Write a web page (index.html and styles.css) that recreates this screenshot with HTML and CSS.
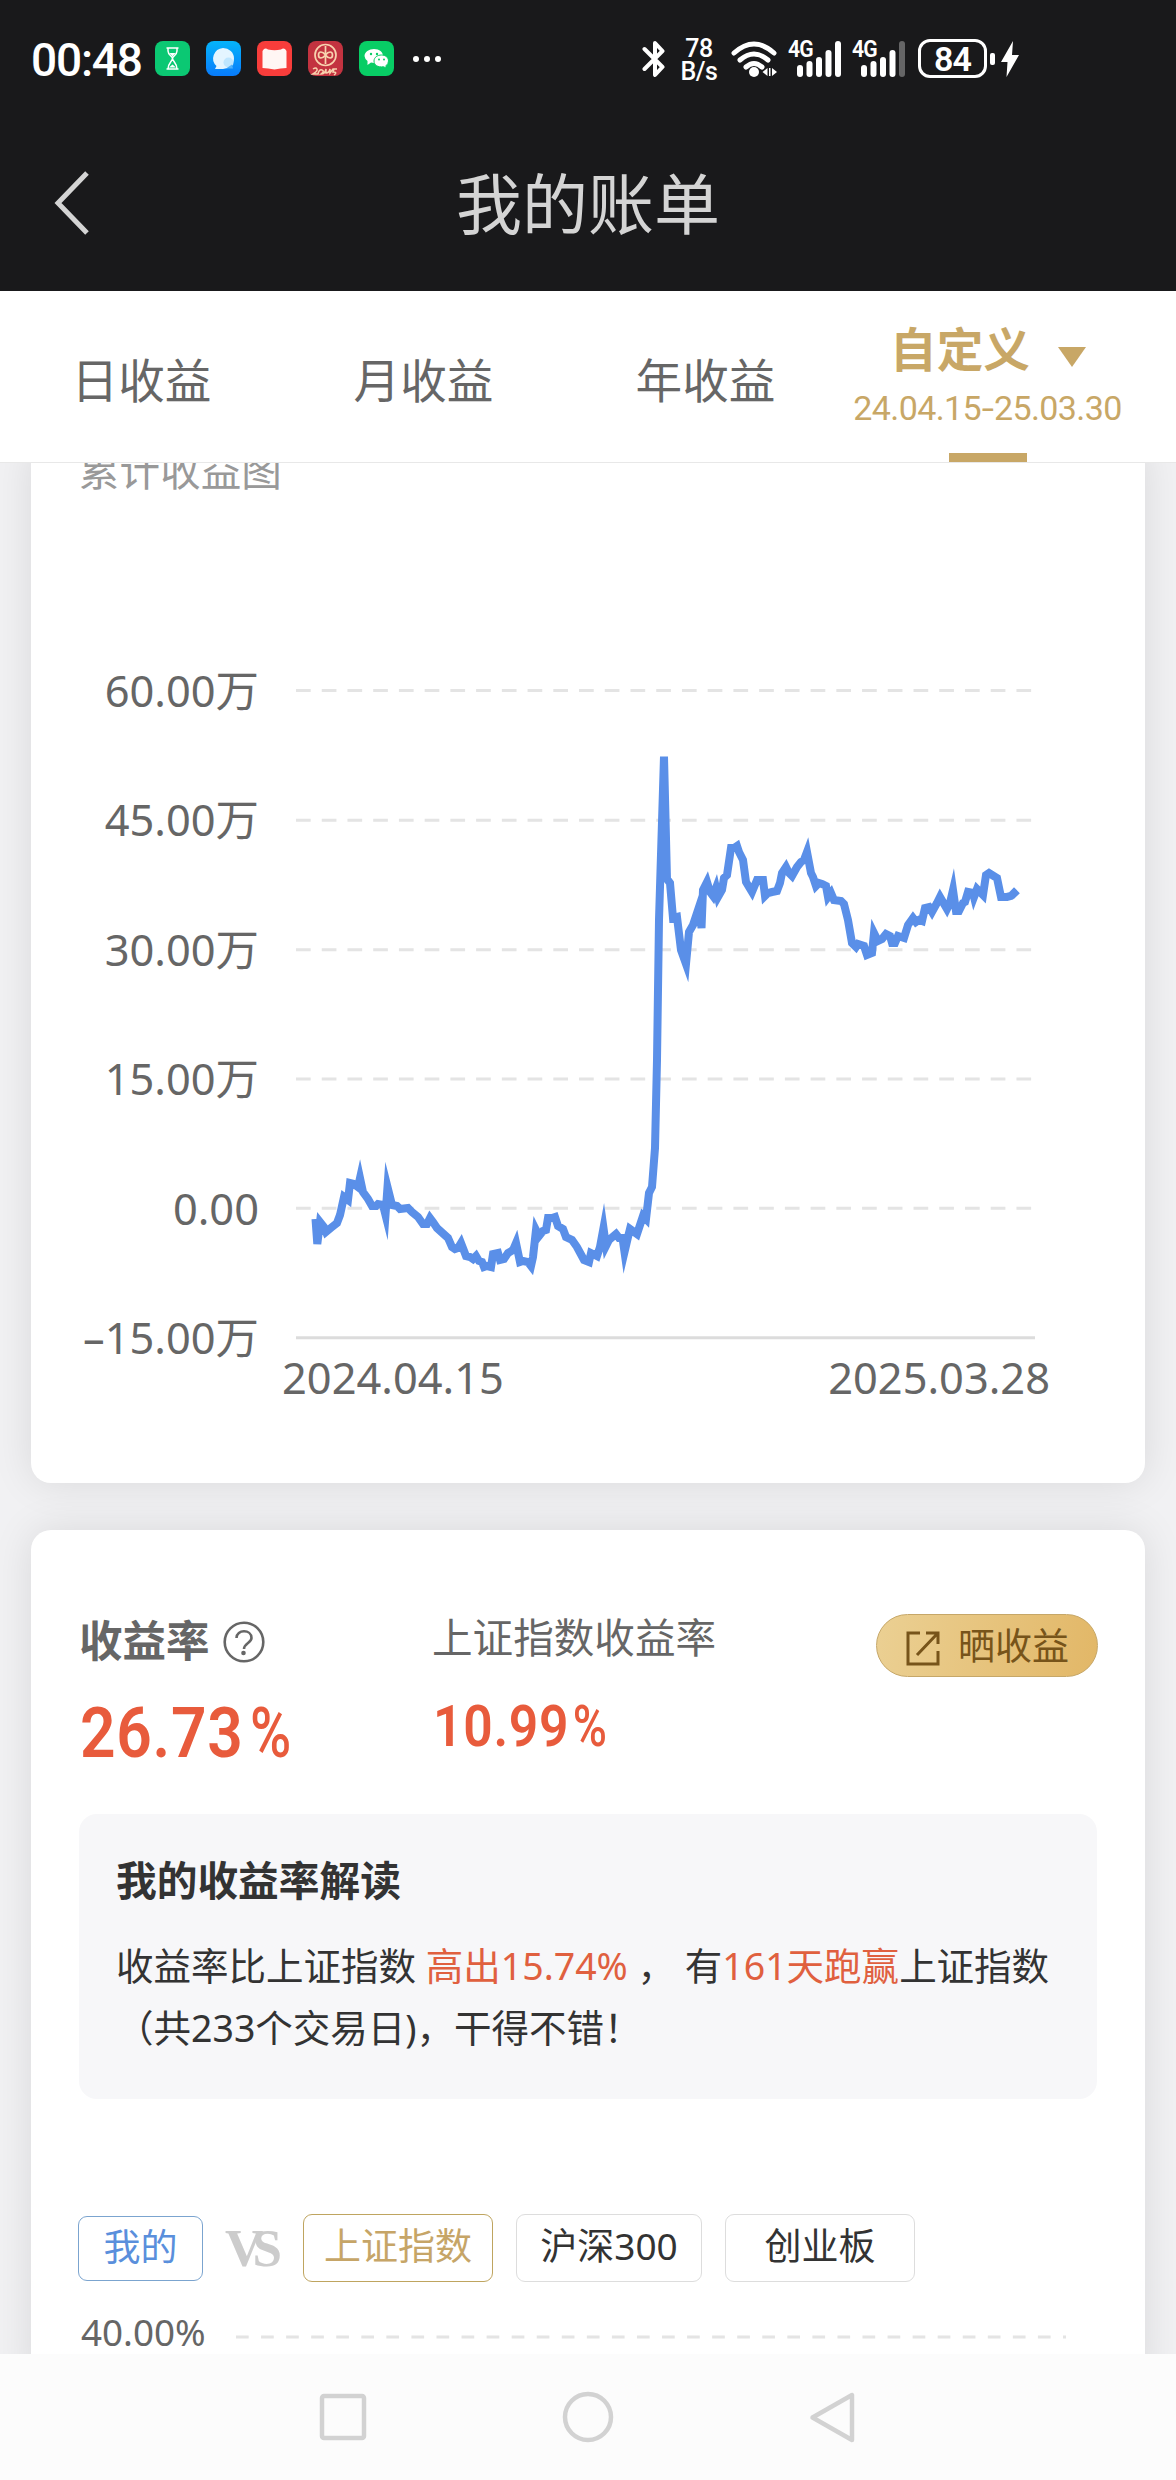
FILE: index.html
```html
<!DOCTYPE html>
<html lang="zh-CN">
<head>
    <meta charset="UTF-8">
    <meta name="viewport" content="width=device-width, initial-scale=1.0">
    <title>我的账单</title>
    <link rel="stylesheet" href="styles.css">
</head>
<body>

    <header class="top">
        <div class="status-bar">
            <span class="clock">00:48</span>
            <div class="app-icons">
                <svg viewBox="0 0 35 35"><rect width="35" height="35" rx="8" fill="#0bc873"/><path d="M11.5 7h12M11.5 28h12M13 7v3c0 4 4.500 5 4.500 7.500S13 22 13 28M22 7v3c0 4-4.500 5-4.500 7.500S22 22 22 28" fill="none" stroke="#fff" stroke-width="1.500"/><path d="M14.500 12h6l-3 3.500zM14 26.500h7l-3.500-3z" fill="#fff"/></svg>
                <svg viewBox="0 0 35 35"><defs><linearGradient id="blue" x2="0" y2="1"><stop stop-color="#05b4fb"/><stop offset="1" stop-color="#087bfb"/></linearGradient></defs><rect width="35" height="35" rx="8" fill="url(#blue)"/><path d="M17 7a11 10.500 0 0 1 0 21H9l1.500-3A11 10.500 0 0 1 17 7z" fill="#e4f5ff"/><circle cx="22.500" cy="21.500" r="5" fill="#bfe6fe"/><path d="M20 27.500h7l-1-4z" fill="#4eb0fc"/></svg>
                <svg viewBox="0 0 35 35"><rect width="35" height="35" rx="8" fill="#f83d3b"/><path d="M7 8q2-1 4 .5 6.500 1.500 13 0Q26 7 28 8l1.500 2v17q-6 0-12 1.500Q11 27 5.500 27V10z" fill="#fff6f4"/></svg>
                <svg viewBox="0 0 35 35"><rect width="35" height="35" rx="8" fill="#c33340"/><g fill="none" stroke="#f8d2ae" stroke-width="1.700"><circle cx="17.500" cy="14" r="10.500"/><path d="M17.500 5v18M17.500 14c-3-4-7-4-7 0s4 4 7 0 7-4 7 0-4 4-7 0"/><path d="M5 28q3-2 4 0t-4 5h5q1-5 4-4t-1 4q4 0 5-5v4q3 0 4-4v4l3-4h4M26 28l-1 3q5 0 1 3" stroke-width="1.500"/></g></svg>
                <svg viewBox="0 0 35 35"><rect width="35" height="35" rx="8" fill="#08cd65"/><g fill="#fff"><path d="M15 8c5.500 0 9 3.200 9 7s-3.500 7-9 7l-3-.5L8.500 24v-4A7 7 0 0 1 5.500 15C5.500 11 10 8 15 8z"/><path d="M22.500 14c4 0 7 2.600 7 6a6 6 0 0 1-2.500 4.700V27l-2.500-1.300c-6 1-9.500-2-9.500-5.700s3.500-6 7.500-6z" stroke="#08cd65"/></g><g fill="#08cd65"><circle cx="12" cy="13" r="1.200"/><circle cx="18" cy="13" r="1.200"/><circle cx="20" cy="18.500" r="1"/><circle cx="25" cy="18.500" r="1"/></g></svg>
            </div>
            <svg class="more" viewBox="0 0 30 8"><g fill="#fff"><circle cx="4" cy="4" r="3"/><circle cx="15" cy="4" r="3"/><circle cx="26" cy="4" r="3"/></g></svg>

            <div class="system">
                <svg class="bluetooth" viewBox="0 0 24 38"><path d="M2.500 9l18 18-7.500 8V3l7.500 8-18 18" fill="none" stroke="#fff" stroke-width="4" stroke-linejoin="round" stroke-linecap="round"/></svg>
                <div class="speed"><span>78</span><span>B/s</span></div>
                <svg class="wifi" viewBox="0 0 46 36"><g fill="none" stroke="#fff" stroke-width="5" stroke-linecap="round"><path d="M3 12q20-18 40 0M9 19q14-12 28 0M15 26q8-7 16 0"/></g><circle cx="23" cy="31" r="5" fill="#fff"/><path d="M36.500 27v8l-5-4zM38 27h1.500v8H38zM41 27v8l5-4z" fill="#fff"/></svg>
                <div class="signal">
                    <span>4G</span>
                    <svg viewBox="0 0 52 36"><g fill="#fff"><rect x="8" y="24" width="6" height="12" rx="3"/><rect x="17.500" y="20" width="6" height="16" rx="3"/><rect x="27" y="16" width="6" height="20" rx="3"/><rect x="36.500" y="9" width="6" height="27" rx="3"/><rect x="46" y="0" width="6" height="36" rx="3"/></g></svg>
                </div>
                <div class="signal">
                    <span>4G</span>
                    <svg viewBox="0 0 52 36"><g fill="#fff"><rect x="8" y="24" width="6" height="12" rx="3"/><rect x="17.500" y="20" width="6" height="16" rx="3"/><rect x="27" y="16" width="6" height="20" rx="3"/><rect x="36.500" y="9" width="6" height="27" rx="3"/><rect x="46" y="0" width="6" height="36" rx="3" fill="#656566"/></g></svg>
                </div>
                <div class="battery">84</div>
                <span class="battery-tip"></span>
                <svg class="bolt" viewBox="0 0 18 36"><path d="M12 0L0 21h6.500L5.500 36 18 14h-7z" fill="#fff"/></svg>
            </div>
        </div>
        <div class="title-bar">
            <svg class="back" viewBox="0 0 36 64"><path d="M33 2L4 32l29 30" fill="none" stroke="#d4d4d4" stroke-width="5"/></svg>
            <h1>我的账单</h1>
        </div>
    </header>

    <nav class="tabs">
        <div class="tab">日收益</div>
        <div class="tab">月收益</div>
        <div class="tab">年收益</div>
        <div class="tab active">
            <div class="tab-name">自定义<i class="arrow"></i></div>
            <div class="tab-range">24.04.15<i>-</i>25.03.30</div>
        </div>
    </nav>

    <main class="content">
        <section class="card chart-card">
            <h2>累计收益图</h2>
            <div class="chart">
                <div class="y-axis">
                    <span>60.00万</span>
                    <span>45.00万</span>
                    <span>30.00万</span>
                    <span>15.00万</span>
                    <span>0.00</span>
                    <span>–15.00万</span>
                </div>
                <svg class="plot" viewBox="0 0 756 700">
                    <g class="grid-line">
                        <path d="M16 50.500h736M16 180.300h736M16 309.700h736M16 439h736M16 568.300h736"/>
                    </g>
                    <path d="M16 697.700h739" stroke="#dcdcdc" stroke-width="3"/>
                    <polyline class="profit-line" points="35.500,579 37.300,604 40,582 44,587 46,592 52,587 57,583 60,575 64,557 68,560 70,543 74,544 78,547 80,538 83,552 88,559 92,566 96,566 98,564 103,565 105.500,575 107.500,547 112,565 117,566 120,569 128,568 132,572 138,577 143,584 147,584 150,578 153,582 157,588 168,598 172,607 175,609 178,608 181,603 186,616 190,617 193,619 196,616 199,621 202,622 204,627 207,626 211,627 213,614 218,613 220,620 224,619 228,613 233,610 236,603 240,622 243,621 248,622 251,626 253,617 256,590 259,596 263,591 266,590 268,578 272,578 275,577 278,586 283,589 286,597 292,600 297,607 304,620 309,622 311,613 317,616 320,607 323.500,588 326,606 329,600 336,594 339,598 342.500,598 344.500,612 348,597 350,589 357,594 363,576 366,579 369,553 372,547 375,508 377,420 379,280 384,116.700 387,239 390,243 393,278 397,277 401,310 406,324 409,292 413,285 419,267 421.500,288 423,250 427,242 430,252 433,256 436,248 438,257 442,250 444,238 447,235 451,208 454,208 457,206 459,212 463,220 466,242 469,247 472,252 477,240 483,240 485,256 488,253 492,252 497,251 500,243 502,233 506,227 509,233 512,236 517,227 521,222 524,220 527,212 531,233 533,237 536,246 539,243 542,244 546,246 548,257 551,253 554,260 561,261 564,264 568,280 572,303 576,307 578,304 584,306 587,315 592,313 594,293 598,301 602,299 606,294 610,296 612,303 615,303 618,296 624,298 628,285 633,278 636,282 639,280 642,281 645,268 649,267 652,272 657,263 660,257 667,269 670,263 673,250 676,271 679,271 683,263 685,262 688,252 693,253 694,257 697,249 703,255 706,235 709,233 717,238 721,257 723,257 727,257 731,256 734,253 737,256"/>
                </svg>
            </div>
            <div class="x-axis">
                <span>2024.04.15</span>
                <span>2025.03.28</span>
            </div>
        </section>

        <section class="card rate-card">
            <div class="rates">
                <div class="rate mine">
                    <div class="rate-label">收益率
                        <svg class="help" viewBox="0 0 42 42"><g fill="none" stroke="#666" stroke-width="2.600"><circle cx="21" cy="21" r="19.300"/><path d="M13.500 17c0-9 15-9 15 0 0 5-7.500 5-7.500 11"/></g><circle cx="20.500" cy="32" r="2.300" fill="#666"/></svg>
                    </div>
                    <div class="rate-value"><b>26.73</b><span>%</span></div>
                </div>
                <div class="rate index">
                    <div class="rate-label">上证指数收益率</div>
                    <div class="rate-value"><b>10.99</b><span>%</span></div>
                </div>
                <button class="share">
                    <svg viewBox="0 0 34 36"><path d="M14 3H2v31h30V21M20 3h12v11M31 4L11 25" fill="none" stroke="#77541a" stroke-width="3"/></svg>
                    晒收益
                </button>
            </div>

            <div class="summary">
                <h3>我的收益率解读</h3>
                <p>收益率比上证指数 <em>高出15.74%</em> ， 有<em>161天跑赢</em>上证指数<br>（共233个交易日)，干得不错！</p>
            </div>

            <div class="compare">
                <span class="tag blue">我的</span>
                <span class="vs">VS</span>
                <span class="tag gold">上证指数</span>
                <span class="tag hs">沪深300</span>
                <span class="tag cy">创业板</span>
            </div>

            <div class="rate-axis">
                <span>40.00%</span>
                <svg viewBox="0 0 830 4"><path d="M0 2h830" stroke="#e4e4e4" stroke-width="3" stroke-dasharray="12.700 12.360"/></svg>
            </div>
        </section>
    </main>

    <footer class="nav-bar">
        <svg viewBox="0 0 52 52"><rect x="5" y="5" width="42" height="42" rx="2"/></svg>
        <svg viewBox="0 0 52 52"><circle cx="26" cy="26" r="23"/></svg>
        <svg viewBox="0 0 52 52"><path d="M45 4v45L5.500 26.500z"/></svg>
    </footer>

</body>
</html>
```
FILE: styles.css
```css
* {
    box-sizing: border-box;
}

body {
    margin: 0;
    width: 1176px;
    height: 2480px;
    overflow: hidden;
    display: flex;
    flex-direction: column;
    background-color: #f1f1f3;
    color: #666;
    font-family: "Noto Sans", "Noto Sans CJK SC", sans-serif;
}

h1, h2, h3, p {
    margin: 0;
    font-weight: normal;
}

svg {
    display: block;
    flex: none;
}

/* header */
.top {
    height: 291px;
    flex: none;
    background-color: #19191b;
}

.status-bar {
    display: flex;
    align-items: center;
    height: 117px;
    padding-left: 31px;
    color: #fff;
    font-family: Roboto, sans-serif;
}

.clock {
    width: 124px;
    padding-top: 3px;
    font-size: 46px;
    font-weight: 500;
    letter-spacing: -1.2px;
}

.app-icons {
    display: flex;
    gap: 16px;
}

.app-icons svg {
    width: 35px;
    height: 35px;
}

.more {
    width: 30px;
    height: 8px;
    margin-left: 18px;
}

.system {
    display: flex;
    align-items: center;
    margin-left: 200px;
}

.bluetooth {
    width: 24px;
    height: 38px;
}

.speed {
    display: flex;
    flex-direction: column;
    align-items: center;
    width: 36px;
    margin-left: 15px;
    padding-top: 2px;
    font-size: 25px;
    line-height: 23px;
    font-weight: 500;
    letter-spacing: -0.5px;
}

.wifi {
    width: 46px;
    height: 36px;
    margin-left: 14px;
}

.signal {
    position: relative;
    width: 52px;
    margin-left: 12px;
}

.signal svg {
    width: 52px;
    height: 36px;
}

.signal span {
    position: absolute;
    left: -1px;
    top: -3px;
    font-size: 23px;
    line-height: 24px;
    font-weight: 600;
    letter-spacing: -1px;
    transform: scaleX(0.92);
    transform-origin: left;
}

.battery {
    width: 69px;
    height: 39px;
    margin-left: 13px;
    border: 3px solid #fff;
    border-radius: 12px;
    font-size: 34px;
    line-height: 35px;
    font-weight: 600;
    letter-spacing: -1px;
    text-align: center;
}

.battery-tip {
    width: 5px;
    height: 12px;
    margin-left: 3px;
    border-radius: 2px;
    background-color: #fff;
}

.bolt {
    width: 18px;
    height: 36px;
    margin-left: 6px;
}

.title-bar {
    display: flex;
    align-items: center;
    height: 172px;
    padding-left: 54px;
    color: #d4d4d4;
}

.back {
    width: 36px;
    height: 64px;
}

.title-bar h1 {
    flex: 1;
    margin-right: 90px;
    font-size: 66px;
    line-height: 80px;
    text-align: center;
}

/* tabs */
.tabs {
    display: flex;
    flex: none;
    height: 172px;
    background-color: #fff;
    border-bottom: 1px solid #e8e8e8;
}

.tab {
    width: 282px;
    padding-left: 1px;
    font-size: 46.6px;
    line-height: 178px;
    text-align: center;
}

.tab.active {
    display: flex;
    flex-direction: column;
    align-items: center;
    color: #c8a766;
    line-height: 50px;
}

.tab.active::after {
    content: "";
    width: 78px;
    height: 9px;
    margin-top: 24px;
    background-color: #c8a766;
}

.tab-name {
    display: flex;
    align-items: center;
    height: 86px;
    padding: 33px 2px 0 3px;
    font-weight: bold;
}

.arrow {
    margin: 16px 0 0 28px;
    border: 14px solid transparent;
    border-top: 20px solid #c8a766;
    border-bottom: 0;
}

.tab-range {
    margin-top: 13px;
    font-family: Roboto, sans-serif;
    font-size: 34px;
    line-height: 42px;
    letter-spacing: -0.6px;
    white-space: nowrap;
}

.tab-range i {
    display: inline-block;
    margin: 0 2px;
    font-style: normal;
    transform: scaleX(1.3);
}

/* cards */
.content {
    flex: 1;
    overflow: hidden;
    padding: 0 31px;
}

.card {
    background-color: #fff;
    border-radius: 20px;
    box-shadow: 0 0 40px rgba(0, 0, 0, 0.1);
}

.chart-card {
    height: 1040px;
    margin-top: -20px;
    padding-top: 1px;
}

.chart-card h2 {
    margin: 0 0 0 48px;
    padding-top: 2px;
    font-size: 40.6px;
    line-height: 50px;
    color: #999;
}

.chart {
    display: flex;
    margin-top: 144px;
}

.y-axis {
    width: 229px;
    flex: none;
    padding-right: 1px;
    display: flex;
    flex-direction: column;
    text-align: right;
    font-size: 43.4px;
}

.y-axis span {
    height: 129.4px;
    line-height: 101px;
}

.plot {
    width: 756px;
    height: 700px;
    margin-left: 20px;
}

.grid-line {
    fill: none;
    stroke: #e4e4e4;
    stroke-width: 3;
    stroke-dasharray: 14.7 11.03;
}

.profit-line {
    fill: none;
    stroke: #5a8fe8;
    stroke-width: 8;
    stroke-miterlimit: 10;
}

.x-axis {
    display: flex;
    justify-content: space-between;
    margin-top: -68px;
    padding: 0 95px 0 251px;
    font-size: 43.4px;
    line-height: 60px;
}

.rate-card {
    height: 860px;
    margin-top: 47px;
    padding: 84px 48px 0;
}

.rates {
    display: flex;
    height: 200px;
}

.mine {
    width: 353px;
}

.rate-label {
    display: flex;
    align-items: center;
    height: 49px;
    font-size: 43.5px;
    font-weight: bold;
}

.help {
    width: 42px;
    height: 42px;
    margin: 7px 0 0 13px;
}

.index .rate-label {
    height: 43px;
    font-size: 40.6px;
    font-weight: normal;
}

.rate-value {
    display: flex;
    align-items: baseline;
    gap: 7px;
    margin: 27px 0 0 1px;
    transform: scaleX(0.89);
    transform-origin: left;
    font-family: Roboto, sans-serif;
    font-size: 70px;
    line-height: 86px;
    color: #e85b3c;
}

.rate-value b {
    font-weight: 600;
    letter-spacing: 0.8px;
}

.rate-value span {
    display: inline-block;
    transform: scaleX(0.9);
    transform-origin: left;
    font-weight: 500;
}

.index .rate-value {
    gap: 4px;
    margin-top: 31px;
    font-size: 58px;
    line-height: 76px;
}

.share {
    display: flex;
    align-items: center;
    width: 222px;
    height: 63px;
    margin: 0 -1px 0 auto;
    padding: 0 0 0 29px;
    gap: 18px;
    border: 1px solid #c6a768;
    border-radius: 32px;
    background: linear-gradient(100deg, #ebd093, #e2b767);
    color: #77541a;
    font-family: inherit;
    font-size: 37px;
    line-height: 50px;
}

.share svg {
    width: 34px;
    height: 36px;
    margin-top: 5px;
}

.summary {
    height: 285px;
    padding: 41px 37px 0;
    border-radius: 18px;
    background-color: #f7f7f9;
    color: #333;
}

.summary h3 {
    font-size: 40.7px;
    line-height: 50px;
    font-weight: bold;
}

.summary p {
    margin-top: 30px;
    font-size: 37.5px;
    line-height: 62px;
    white-space: nowrap;
}

.summary em {
    font-style: normal;
    color: #e0603f;
}

.compare {
    display: flex;
    align-items: center;
    margin: 115px 0 0 -1px;
    font-size: 37px;
    color: #333;
}

.tag {
    width: 190px;
    height: 68px;
    border: 1px solid #ddd;
    border-radius: 9px;
    line-height: 61px;
    text-align: center;
}

.tag.blue {
    width: 125px;
    height: 65px;
    border-color: #7ba4cf;
    color: #5a8fdc;
    line-height: 59px;
}

.tag.gold {
    border-color: #bfa560;
    color: #c6a567;
}

.tag.hs {
    width: 186px;
    margin: 0 23px;
}

.vs {
    width: 100px;
    padding-right: 10px;
    font-family: "Liberation Serif", serif;
    font-size: 53px;
    line-height: 60px;
    font-weight: bold;
    letter-spacing: -11px;
    text-align: center;
    color: #ccc;
}

.rate-axis {
    display: flex;
    align-items: center;
    margin-top: 25px;
    padding-left: 2px;
    font-size: 36.8px;
    line-height: 50px;
}

.rate-axis span {
    width: 155px;
}

.rate-axis svg {
    width: 830px;
    height: 4px;
    margin-top: 10px;
}

/* bottom system bar */
.nav-bar {
    display: flex;
    justify-content: center;
    gap: 193px;
    flex: none;
    height: 126px;
    padding-top: 37px;
    background-color: #fcfcfc;
}

.nav-bar svg {
    width: 52px;
    height: 52px;
    fill: none;
    stroke: #d2d2d2;
    stroke-width: 4.5;
    stroke-linejoin: round;
}
```
